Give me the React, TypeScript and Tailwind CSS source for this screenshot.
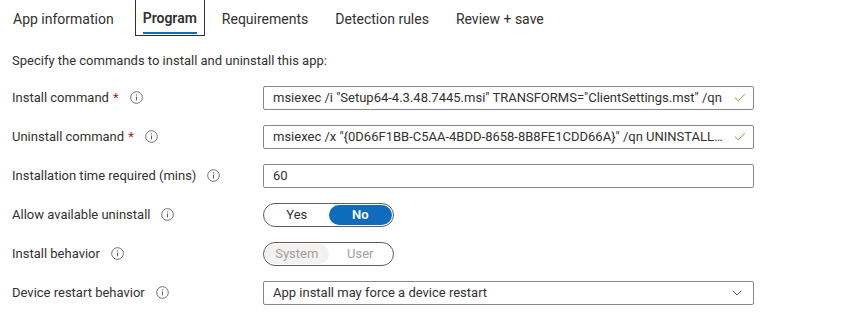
import { Check, ChevronDown } from "lucide-react";

function InfoIcon() {
  return (
    <svg width="13" height="13" viewBox="0 0 13 13" className="shrink-0">
      <circle cx="6.5" cy="6.5" r="5.8" fill="none" stroke="#605e5c" strokeWidth="0.9" />
      <line x1="6.5" y1="5.6" x2="6.5" y2="9.4" stroke="#605e5c" strokeWidth="1" />
      <circle cx="6.5" cy="3.9" r="0.65" fill="#605e5c" />
    </svg>
  );
}

function Label({ text, required }: { text: string; required?: boolean }) {
  return (
    <div className="w-[251px] shrink-0 flex items-center">
      <span>{text}</span>
      {required && <span className="ml-[4px] text-[#a4262c]">*</span>}
      <span className="ml-[11px] flex items-center">
        <InfoIcon />
      </span>
    </div>
  );
}

function TextBox({ value, valid }: { value: string; valid?: boolean }) {
  return (
    <div className="w-[491px] h-[24px] border border-[#8a8886] rounded-[2px] flex items-center pl-[9px] pr-[6px] bg-white">
      <span className="flex-1 truncate">{value}</span>
      {valid && <Check size={14} strokeWidth={1.5} className="text-[#57a300] ml-[3px] shrink-0" />}
    </div>
  );
}

const tabs = ["App information", "Program", "Requirements", "Detection rules", "Review + save"];

export default function App() {
  return (
    <div
      className="w-[858px] h-[315px] bg-white text-[#323130] text-[13px] overflow-hidden"
      style={{ fontFamily: "Roboto, 'Noto Sans', sans-serif" }}
    >
      {/* Tabs */}
      <div className="flex items-stretch h-[36px] pl-[3px] gap-[7px] text-[14px]">
        {tabs.map((t, i) => {
          const active = t === "Program";
          return (
            <div
              key={t}
              className={
                active
                  ? "relative flex items-center px-[7px] border border-t-0 border-[#323130] font-semibold"
                  : i === 0
                  ? "relative flex items-center px-[9px] mr-[4px] border border-transparent"
                  : "relative flex items-center px-[9px] border border-transparent"
              }
            >
              <span className="mt-[2px]">{t}</span>
              {active && (
                <div className="absolute left-[7px] right-[7px] bottom-[1px] h-[2px] bg-[#0f6cbd]" />
              )}
            </div>
          );
        })}
      </div>

      <div className="pl-[12px] pt-[15px]">Specify the commands to install and uninstall this app:</div>

      <div className="flex flex-col gap-[15px] pl-[12px] pt-[15px]">
        <div className="flex items-center h-[24px]">
          <Label text="Install command" required />
          <TextBox
            value={'msiexec /i "Setup64-4.3.48.7445.msi" TRANSFORMS="ClientSettings.mst" /qn'}
            valid
          />
        </div>

        <div className="flex items-center h-[24px]">
          <Label text="Uninstall command" required />
          <TextBox
            value={'msiexec /x "{0D66F1BB-C5AA-4BDD-8658-8B8FE1CDD66A}" /qn UNINSTALLPASSWORD=*******'}
            valid
          />
        </div>

        <div className="flex items-center h-[24px]">
          <Label text="Installation time required (mins)" />
          <TextBox value="60" />
        </div>

        <div className="flex items-center h-[24px]">
          <Label text="Allow available uninstall" />
          <div className="w-[131px] h-[24px] border border-[#605e5c] rounded-full flex items-center p-[1px]">
            <div className="flex-1 text-center">Yes</div>
            <div className="flex-1 h-full rounded-full bg-[#0f6cbd] text-white font-semibold flex items-center justify-center">
              No
            </div>
          </div>
        </div>

        <div className="flex items-center h-[24px]">
          <Label text="Install behavior" />
          <div className="w-[131px] h-[24px] border border-[#605e5c] rounded-full flex items-center p-[1px] text-[#a19f9d]">
            <div className="flex-1 h-full rounded-full bg-[#f3f2f1] flex items-center justify-center">System</div>
            <div className="flex-1 text-center">User</div>
          </div>
        </div>

        <div className="flex items-center h-[24px]">
          <Label text="Device restart behavior" />
          <div className="w-[491px] h-[24px] border border-[#8a8886] rounded-[2px] flex items-center pl-[9px] pr-[8px]">
            <span className="flex-1">App install may force a device restart</span>
            <ChevronDown size={16} strokeWidth={1.2} className="text-[#323130]" />
          </div>
        </div>
      </div>
    </div>
  );
}
